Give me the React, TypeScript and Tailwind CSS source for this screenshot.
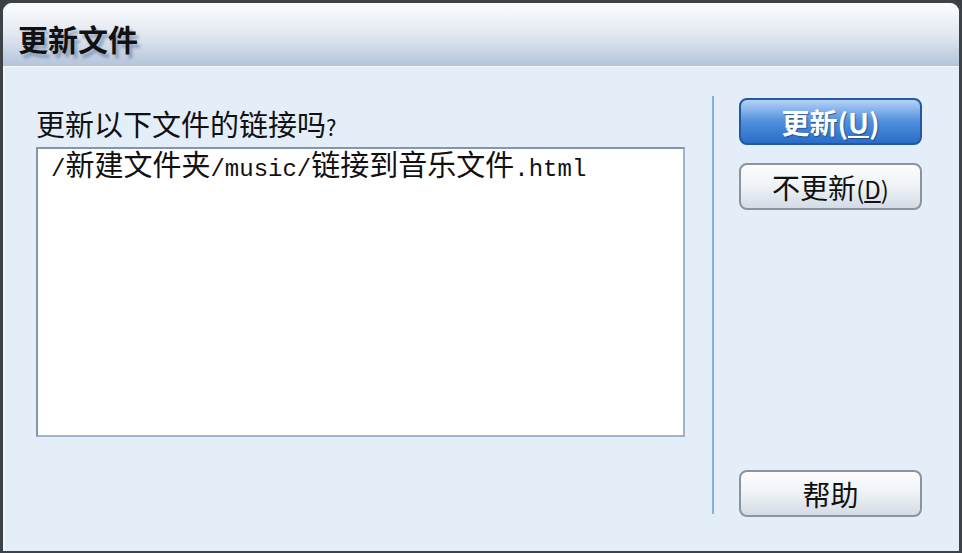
const cjk = "font-['SimSun','Noto_Sans_CJK_SC',sans-serif]";

function Latin({ children }: { children: string }) {
  return <span className="font-['Liberation_Mono',monospace] text-[24px]">{children}</span>;
}

export default function App() {
  return (
    <div className="w-[962px] h-[553px] bg-[#3a3f46]">
      <div className="w-full h-full flex flex-col overflow-hidden rounded-t-[12px] border-[3px] border-b-2 border-[#3d4249] bg-[#e3eef8]">
        {/* title bar */}
        <div className="h-[64px] shrink-0 flex items-center pl-[15px] pt-[8px] border-b border-[#f3f7fc] bg-gradient-to-b from-[#fbfcfe] via-[#e2e8f1] to-[#b3c4db]">
          <span
            className={`${cjk} text-[30px] font-bold text-[#111] [text-shadow:3px_4px_3px_rgba(70,90,130,0.45)]`}
          >
            更新文件
          </span>
        </div>

        {/* body */}
        <div className="flex flex-1 border-l-2 border-[#f0f5fa]">
          <div className="pl-[31px] pt-[38px] flex flex-col">
            <div className={`${cjk} text-[29px] leading-[36px] text-[#111]`}>
              更新以下文件的链接吗<span className="text-[22px]">?</span>
            </div>
            <div className="mt-[3px] w-[649px] h-[290px] bg-white border-2 border-[#8396ad] border-b-[#9fb2c8] border-r-[#9fb2c8] pl-[13px]">
              <div className={`${cjk} text-[29px] leading-[32px] -mt-[2px] text-[#111]`}>
                <Latin>/</Latin>新建文件夹<Latin>/music/</Latin>链接到音乐文件<Latin>.html</Latin>
              </div>
            </div>
          </div>

          <div className="ml-[27px] mt-[29px] w-[2px] h-[418px] bg-[#84b2dd]" />

          <div className="ml-[25px] pt-[31px] pb-[34px] flex flex-col w-[183px]">
            <button className="h-[47px] rounded-[8px] border-2 border-[#2458a0] bg-gradient-to-b from-[#b4d2f4] via-[#4f8fdc] to-[#2a6dc8] flex items-center justify-center">
              <span className={`${cjk} text-[28px] font-bold text-white [text-shadow:1px_1px_1px_rgba(20,50,100,0.6)]`}>
                更新(<span className="underline">U</span>)
              </span>
            </button>
            <button className="mt-[18px] h-[47px] rounded-[8px] border-2 border-[#8c939b] bg-gradient-to-b from-[#fdfdfe] via-[#eef2f6] to-[#d3dbe5] flex items-center justify-center">
              <span className={`${cjk} text-[28px] text-[#111]`}>
                不更新<span className="text-[24px]">(<span className="underline">D</span>)</span>
              </span>
            </button>
            <button className="mt-auto h-[47px] rounded-[8px] border-2 border-[#8c939b] bg-gradient-to-b from-[#fdfdfe] via-[#eef2f6] to-[#d3dbe5] flex items-center justify-center">
              <span className={`${cjk} text-[28px] text-[#111]`}>帮助</span>
            </button>
          </div>
        </div>
      </div>
    </div>
  );
}
